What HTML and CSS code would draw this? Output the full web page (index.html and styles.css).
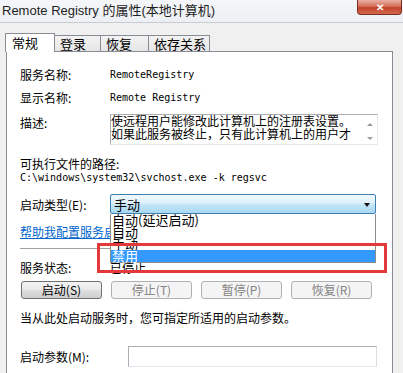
FILE: index.html
```html
<!DOCTYPE html>
<html lang="zh-CN">
<head>
    <meta charset="UTF-8">
    <meta name="viewport" content="width=device-width, initial-scale=1.0">
    <title>Remote Registry 的属性</title>
    <link rel="stylesheet" href="styles.css">
</head>
<body>
    <div class="window">
        <div class="titlebar">
            <span class="title">Remote Registry 的属性(本地计算机)</span>
            <span class="close">&#10005;</span>
        </div>

        <div class="tabs">
            <span class="tab active">常规</span>
            <span class="tab">登录</span>
            <span class="tab">恢复</span>
            <span class="tab">依存关系</span>
        </div>

        <div class="panel">
            <div class="row r-name">
                <span class="label">服务名称:</span>
                <span class="mono">RemoteRegistry</span>
            </div>
            <div class="row r-name">
                <span class="label">显示名称:</span>
                <span class="mono">Remote Registry</span>
            </div>
            <div class="row r-desc">
                <span class="label">描述:</span>
                <div class="desc">
                    <div class="desc-text">使远程用户能修改此计算机上的注册表设置。<br>如果此服务被终止，只有此计算机上的用户才</div>
                    <div class="scroll">
                        <span class="arrow up"></span>
                        <span class="arrow down"></span>
                    </div>
                </div>
            </div>
            <div class="path-label">可执行文件的路径:</div>
            <div class="mono path">C:\windows\system32\svchost.exe -k regsvc</div>
            <div class="row r-type">
                <span class="label">启动类型(E):</span>
                <div class="combo-wrap">
                    <div class="combo">
                        <span>手动</span>
                        <span class="combo-arrow"></span>
                    </div>
                    <ul class="dropdown">
                        <li>自动(延迟启动)</li>
                        <li>自动</li>
                        <li>手动</li>
                        <li class="hl">禁用</li>
                    </ul>
                </div>
            </div>
            <div class="link-row"><a href="#" class="link">帮助我配置服务启动选项。</a></div>
            <div class="sep"></div>
            <div class="row r-status">
                <span class="label">服务状态:</span>
                <span>已停止</span>
            </div>
            <div class="buttons">
                <button class="btn">启动(S)</button>
                <button class="btn" disabled>停止(T)</button>
                <button class="btn" disabled>暂停(P)</button>
                <button class="btn" disabled>恢复(R)</button>
            </div>
            <div class="hint">当从此处启动服务时，您可指定所适用的启动参数。</div>
            <div class="row r-param">
                <span class="label wide">启动参数(M):</span>
                <div class="input"></div>
            </div>
        </div>

        <div class="mark"></div>
    </div>
</body>
</html>
```

FILE: styles.css
```css
body {
    margin: 0;
    font-family: "Noto Sans CJK SC", sans-serif;
    font-size: 12px;
    color: #000;
    background: #f0f0f0;
}

.window {
    position: relative;
    width: 403px;
    height: 373px;
    overflow: hidden;
    background: #f0f0f0;
}

.titlebar {
    height: 23px;
    display: flex;
    justify-content: space-between;
    align-items: flex-start;
    background: linear-gradient(#f4f6f9, #eceff3);
    border-bottom: 1px solid #c9ccd1;
    box-sizing: border-box;
}

.title {
    font-family: "Liberation Sans", "Noto Sans CJK SC", sans-serif;
    font-size: 13px;
    line-height: 22px;
    padding-left: 2px;
    color: #1e1e1e;
}

.close {
    width: 45px;
    height: 15px;
    margin-right: 1px;
    box-sizing: border-box;
    border: 1px solid #7a2d22;
    border-top: none;
    border-radius: 0 0 4px 4px;
    background: linear-gradient(#eab0a4, #d5705c 45%, #c2412a 55%, #d56a4e);
    color: #fff;
    font-size: 10px;
    font-weight: bold;
    line-height: 13px;
    text-align: center;
}

.tabs {
    display: flex;
    align-items: flex-end;
    height: 27px;
    padding-left: 5px;
    margin-top: 1px;
}

.tab {
    height: 15px;
    line-height: 15px;
    box-sizing: content-box;
    padding-left: 5px;
    border: 1px solid #898c95;
    border-bottom: none;
    border-left: none;
    background: linear-gradient(#f3f3f3, #e6e6e6);
    font-size: 13px;
    white-space: nowrap;
}

.tab:nth-child(2) { width: 40px; }
.tab:nth-child(3) { width: 42px; }
.tab:nth-child(4) { width: 55px; }

.tab.active {
    position: relative;
    z-index: 1;
    width: 42px;
    height: 18px;
    line-height: 17px;
    padding-left: 6px;
    margin-bottom: -1px;
    border-left: 1px solid #898c95;
    background: #fff;
}

.panel {
    width: 387px;
    height: 330px;
    margin-left: 6px;
    padding: 11px 0 0 13px;
    box-sizing: border-box;
    background: #fff;
    border: 1px solid #898c95;
}

.row {
    display: flex;
    align-items: center;
}

.label {
    width: 90px;
    flex-shrink: 0;
}

.label.wide {
    width: 108px;
}

.mono {
    font-family: "DejaVu Sans Mono", "Liberation Mono", monospace;
    font-size: 10px;
}

.r-name {
    height: 23px;
}

.r-desc {
    align-items: flex-start;
    margin-top: 5px;
}

.r-desc .label {
    line-height: 18px;
}

.desc {
    display: flex;
    width: 268px;
    height: 31px;
    box-sizing: border-box;
    border: 1px solid #abadb3;
    border-right-color: #e3e9ef;
    border-bottom-color: #e3e9ef;
}

.desc-text {
    flex: 1;
    font-size: 12px;
    line-height: 13px;
    margin-top: -1px;
    overflow: hidden;
    white-space: nowrap;
}

.scroll {
    width: 15px;
    display: flex;
    flex-direction: column;
    justify-content: space-between;
    align-items: center;
    padding: 8px 0 4px;
}

.arrow {
    width: 0;
    height: 0;
    border-left: 3px solid transparent;
    border-right: 3px solid transparent;
}

.arrow.up { border-bottom: 3px solid #9a9a9a; }
.arrow.down { border-top: 3px solid #9a9a9a; }

.path-label {
    margin-top: 12px;
    line-height: 14px;
}

.path {
    line-height: 14px;
}

.r-type {
    margin-top: 9px;
    height: 20px;
}

.combo-wrap {
    position: relative;
    width: 266px;
}

.combo {
    height: 20px;
    box-sizing: border-box;
    display: flex;
    align-items: center;
    justify-content: space-between;
    padding: 0 5px 0 3px;
    border: 1px solid #3c7fb1;
    border-radius: 2px;
    background: linear-gradient(#f2f9fe, #dcf0fc 45%, #c2e5f8 55%, #a9d8f3);
    font-size: 13px;
}

.combo-arrow {
    width: 0;
    height: 0;
    margin-top: 1px;
    border-left: 3.5px solid transparent;
    border-right: 3.5px solid transparent;
    border-top: 4px solid #111;
}

.dropdown {
    position: absolute;
    top: 100%;
    left: 0;
    z-index: 2;
    width: 266px;
    margin: 0;
    padding: 0;
    list-style: none;
    box-sizing: border-box;
    background: #fff;
    border: 1px solid #8d8d8d;
    border-top: none;
}

.dropdown li {
    height: 12px;
    line-height: 12px;
    padding-left: 1px;
    font-size: 13px;
    white-space: nowrap;
}

.dropdown li.hl {
    position: relative;
    background: #3399ff;
    color: #fff;
}

.link-row {
    margin-top: 10px;
    height: 16px;
    line-height: 16px;
}

.link {
    color: #0066cc;
}

.sep {
    margin-top: 8px;
    width: 356px;
    height: 1px;
    background: #a0a0a0;
}

.r-status {
    margin-top: 9px;
    height: 18px;
}

.buttons {
    display: flex;
    gap: 9px;
    margin: 5px 0 0 1px;
}

.btn {
    width: 81px;
    height: 18px;
    padding: 0;
    border: 1px solid #707070;
    border-radius: 3px;
    background: linear-gradient(#f2f2f2, #ebebeb 45%, #dddddd 55%, #cfcfcf);
    font-family: "Noto Sans CJK SC", sans-serif;
    font-size: 12px;
    line-height: 16px;
    color: #000;
}

.btn:disabled {
    border-color: #adb2b5;
    background: #f4f4f4;
    color: #838383;
}

.hint {
    margin-top: 10px;
    line-height: 18px;
}

.r-param {
    margin-top: 19px;
}

.input {
    width: 249px;
    height: 21px;
    box-sizing: border-box;
    border: 1px solid #abadb3;
    border-right-color: #dbdfe6;
    border-bottom-color: #e3e9ef;
}

.mark {
    position: absolute;
    left: 97px;
    top: 243px;
    width: 290px;
    height: 30px;
    box-sizing: border-box;
    border: 3px solid #e5383b;
    z-index: 3;
}
```
